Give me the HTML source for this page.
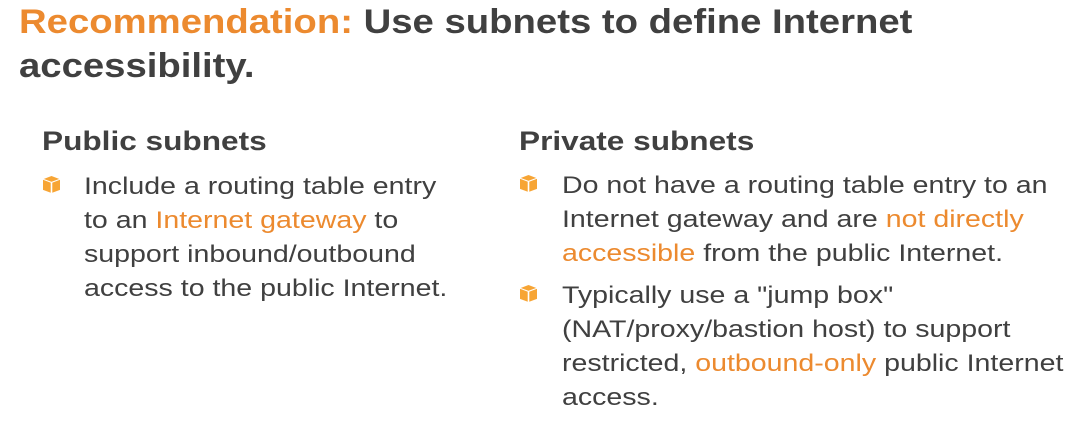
<!DOCTYPE html>
<html><head><style>
body{margin:0;width:1088px;height:430px;background:#fff;font-family:"Liberation Sans",sans-serif;color:#404040;position:relative;overflow:hidden}
.t{position:absolute;left:19px;top:0px;font-size:34px;font-weight:bold;line-height:44px;color:#404040;transform:scaleX(1.126);transform-origin:0 0;white-space:nowrap}
.o{color:#EC8A2F}
.h{position:absolute;font-size:27px;font-weight:bold;color:#404040;transform:scaleX(1.17);transform-origin:0 0;white-space:nowrap}
.b{position:absolute;font-size:24.5px;line-height:34px;transform:scaleX(1.165);transform-origin:0 0;white-space:nowrap}
.i{position:absolute;width:17px;height:17px}
</style></head><body>
<div class="t"><span class="o">Recommendation:</span> Use subnets to define Internet<br>accessibility.</div>
<div class="h" style="left:42px;top:126px">Public subnets</div>
<div class="h" style="left:519px;top:126px">Private subnets</div>
<svg class="i" style="left:43px;top:176px" viewBox="0 0 16 16"><polygon points="8,0 16,3 16,13 8,16 0,13 0,3" fill="#F7A535"/><polyline points="0,3 8,6 16,3" fill="none" stroke="#fff" stroke-width="1"/><line x1="8" y1="6" x2="8" y2="16" stroke="#fff" stroke-width="1.5"/></svg>
<div class="b" style="left:84px;top:170px">Include a routing table entry<br>to an <span class="o">Internet gateway</span> to<br>support inbound/outbound<br>access to the public Internet.</div>
<svg class="i" style="left:520px;top:175px" viewBox="0 0 16 16"><polygon points="8,0 16,3 16,13 8,16 0,13 0,3" fill="#F7A535"/><polyline points="0,3 8,6 16,3" fill="none" stroke="#fff" stroke-width="1"/><line x1="8" y1="6" x2="8" y2="16" stroke="#fff" stroke-width="1.5"/></svg>
<div class="b" style="left:562px;top:169px">Do not have a routing table entry to an<br>Internet gateway and are <span class="o">not directly<br>accessible</span> from the public Internet.</div>
<svg class="i" style="left:520px;top:285px" viewBox="0 0 16 16"><polygon points="8,0 16,3 16,13 8,16 0,13 0,3" fill="#F7A535"/><polyline points="0,3 8,6 16,3" fill="none" stroke="#fff" stroke-width="1"/><line x1="8" y1="6" x2="8" y2="16" stroke="#fff" stroke-width="1.5"/></svg>
<div class="b" style="left:562px;top:279px">Typically use a "jump box"<br>(NAT/proxy/bastion host) to support<br>restricted, <span class="o">outbound-only</span> public Internet<br>access.</div>
</body></html>
